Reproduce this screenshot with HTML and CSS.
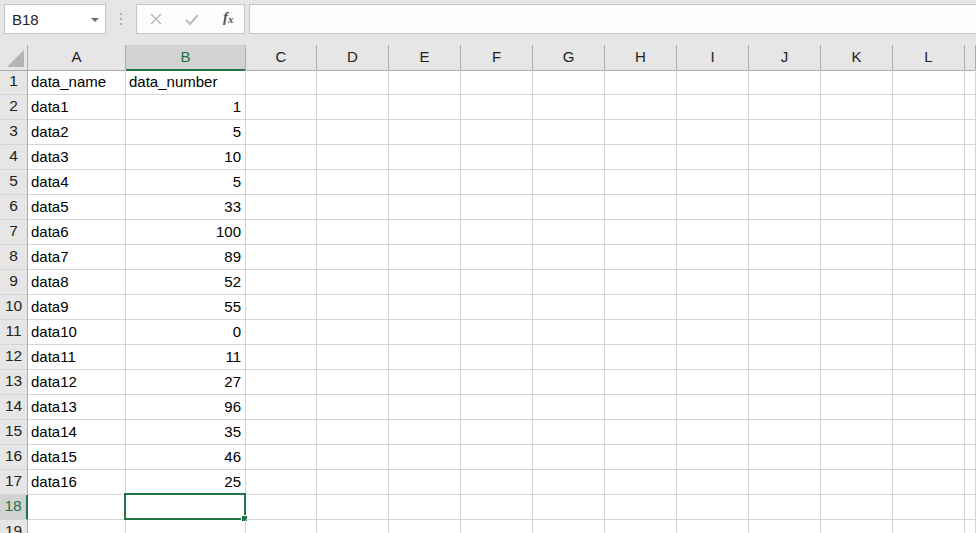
FILE: index.html
```
<!DOCTYPE html>
<html lang="ja">
<head>
    <meta charset="UTF-8">
    <meta name="viewport" content="width=device-width, initial-scale=1.0">
    <title>Book1 - Excel</title>
    <link rel="stylesheet" href="styles.css">
</head>
<body>
    <!-- Barra de fórmulas -->
    <div class="formula-bar">
        <div class="name-box">
            <span>B18</span>
            <span class="arrow"></span>
        </div>
        <div class="grip"><i></i><i></i><i></i></div>
        <div class="fx-buttons">
            <svg class="ico" width="14" height="14" viewBox="0 0 14 14">
                <path d="M2 2 L12 12 M12 2 L2 12" stroke="#b3b3b3" stroke-width="1.3" fill="none"/>
            </svg>
            <svg class="ico" width="14" height="14" viewBox="0 0 14 14">
                <path d="M1 8 L5 12 L13 3" stroke="#bcbcbc" stroke-width="2" fill="none"/>
            </svg>
            <span class="fx">f<sub>x</sub></span>
        </div>
        <div class="formula-input"></div>
    </div>

    <!-- Hoja de cálculo -->
    <div class="sheet" id="sheet">
        <div class="row head">
            <div class="corner"><span class="tri"></span></div>
            <div class="col-head">A</div>
            <div class="col-head active">B</div>
            <div class="col-head">C</div>
            <div class="col-head">D</div>
            <div class="col-head">E</div>
            <div class="col-head">F</div>
            <div class="col-head">G</div>
            <div class="col-head">H</div>
            <div class="col-head">I</div>
            <div class="col-head">J</div>
            <div class="col-head">K</div>
            <div class="col-head">L</div>
            <div class="col-head"></div>
        </div>
    </div>

    <script>
        // Datos de la hoja
        const data = [
            ["data_name", "data_number"],
            ["data1", 1], ["data2", 5], ["data3", 10], ["data4", 5],
            ["data5", 33], ["data6", 100], ["data7", 89], ["data8", 52],
            ["data9", 55], ["data10", 0], ["data11", 11], ["data12", 27],
            ["data13", 96], ["data14", 35], ["data15", 46], ["data16", 25]
        ];
        const sheet = document.getElementById('sheet');

        for (let r = 1; r <= 19; r++) {
            const row = document.createElement('div');
            row.className = 'row';
            const values = data[r - 1] || ["", ""];

            const num = document.createElement('div');
            num.className = 'row-head' + (r === 18 ? ' active' : '');
            num.textContent = r;
            row.appendChild(num);

            for (let c = 0; c < 13; c++) {
                const cell = document.createElement('div');
                cell.className = 'cell';
                if (c < 2 && values[c] !== "") {
                    cell.textContent = values[c];
                    if (typeof values[c] === 'number') cell.classList.add('num');
                }
                // Celda seleccionada B18
                if (r === 18 && c === 1) {
                    const sel = document.createElement('div');
                    sel.className = 'selection';
                    sel.innerHTML = '<span class="handle"></span>';
                    cell.appendChild(sel);
                }
                row.appendChild(cell);
            }
            sheet.appendChild(row);
        }
    </script>
</body>
</html>
```

FILE: styles.css
```
/* Página */
body {
    margin: 0;
    background-color: #e6e6e6;
    font-family: "Liberation Sans", Arial, "Noto Sans CJK JP", sans-serif;
    color: #000;
    overflow: hidden;
}
/* Barra de fórmulas */
.formula-bar {
    display: flex;
    align-items: flex-start;
    height: 45px;
    padding: 4px 0 0 4px;
    box-sizing: border-box;
}
.name-box {
    width: 102px;
    height: 30px;
    box-sizing: border-box;
    border: 1px solid #c6c6c6;
    background-color: #fff;
    display: flex;
    align-items: center;
    justify-content: space-between;
    padding: 0 6px 0 7px;
    font-size: 15px;
    color: #222;
}
.arrow {
    width: 0;
    height: 0;
    border-left: 4px solid transparent;
    border-right: 4px solid transparent;
    border-top: 4px solid #6e6e6e;
    margin-top: 1px;
}
.grip {
    width: 30px;
    height: 30px;
    display: flex;
    flex-direction: column;
    align-items: center;
    justify-content: center;
    gap: 3px;
}
.grip i {
    width: 2px;
    height: 2px;
    background-color: #b0b0b0;
}
.fx-buttons {
    width: 109px;
    height: 30px;
    box-sizing: border-box;
    border: 1px solid #c6c6c6;
    background-color: #fdfdfd;
    display: flex;
    align-items: center;
    padding-left: 12px;
    gap: 22px;
}
.fx {
    font-family: "Liberation Serif", "Times New Roman", serif;
    font-style: italic;
    font-weight: bold;
    font-size: 15px;
    color: #555;
    margin-left: 2px;
    margin-top: -3px;
}
.fx sub {
    font-size: 11px;
    vertical-align: -1px;
}
.formula-input {
    flex: 1;
    height: 30px;
    margin-left: 4px;
    box-sizing: border-box;
    border: 1px solid #c6c6c6;
    border-right: none;
    background-color: #fdfdfd;
}
/* Hoja */
.sheet {
    background-color: #fff;
}
.row {
    display: grid;
    grid-template-columns: 28px 98px 120px 71px repeat(9, 72px) 1fr;
    height: 25px;
}
.row > div {
    box-sizing: border-box;
    border-right: 1px solid #d4d4d4;
    border-bottom: 1px solid #d4d4d4;
}
/* Encabezados */
.row.head {
    background-color: #e6e6e6;
}
.row.head > div {
    border-right-color: #ababab;
    border-bottom-color: #ababab;
}
.col-head {
    font-size: 15px;
    text-align: center;
    line-height: 24px;
    color: #222;
}
.col-head.active {
    background-color: #d2d2d2;
    color: #217346;
    border-bottom: 2px solid #217346 !important;
}
.corner {
    position: relative;
}
.tri {
    position: absolute;
    right: 3px;
    bottom: 3px;
    width: 0;
    height: 0;
    border-left: 17px solid transparent;
    border-bottom: 17px solid #b4b4b4;
}
.row-head {
    background-color: #e6e6e6;
    font-size: 15.5px;
    text-align: center;
    line-height: 22px;
    color: #222;
    border-right-color: #ababab !important;
}
.row-head.active {
    background-color: #d2d2d2;
    color: #217346;
    border-right: 2px solid #217346 !important;
}
/* Celdas */
.cell {
    position: relative;
    font-size: 15px;
    line-height: 23px;
    padding: 0 4px 0 3px;
    white-space: nowrap;
}
.cell.num {
    text-align: right;
}
/* Selección */
.selection {
    position: absolute;
    left: -2px;
    top: -2px;
    width: 122px;
    height: 27px;
    box-sizing: border-box;
    border: 2px solid #217346;
}
.handle {
    position: absolute;
    right: -4px;
    bottom: -4px;
    width: 5px;
    height: 5px;
    background-color: #217346;
    border: 1px solid #fff;
}
```
